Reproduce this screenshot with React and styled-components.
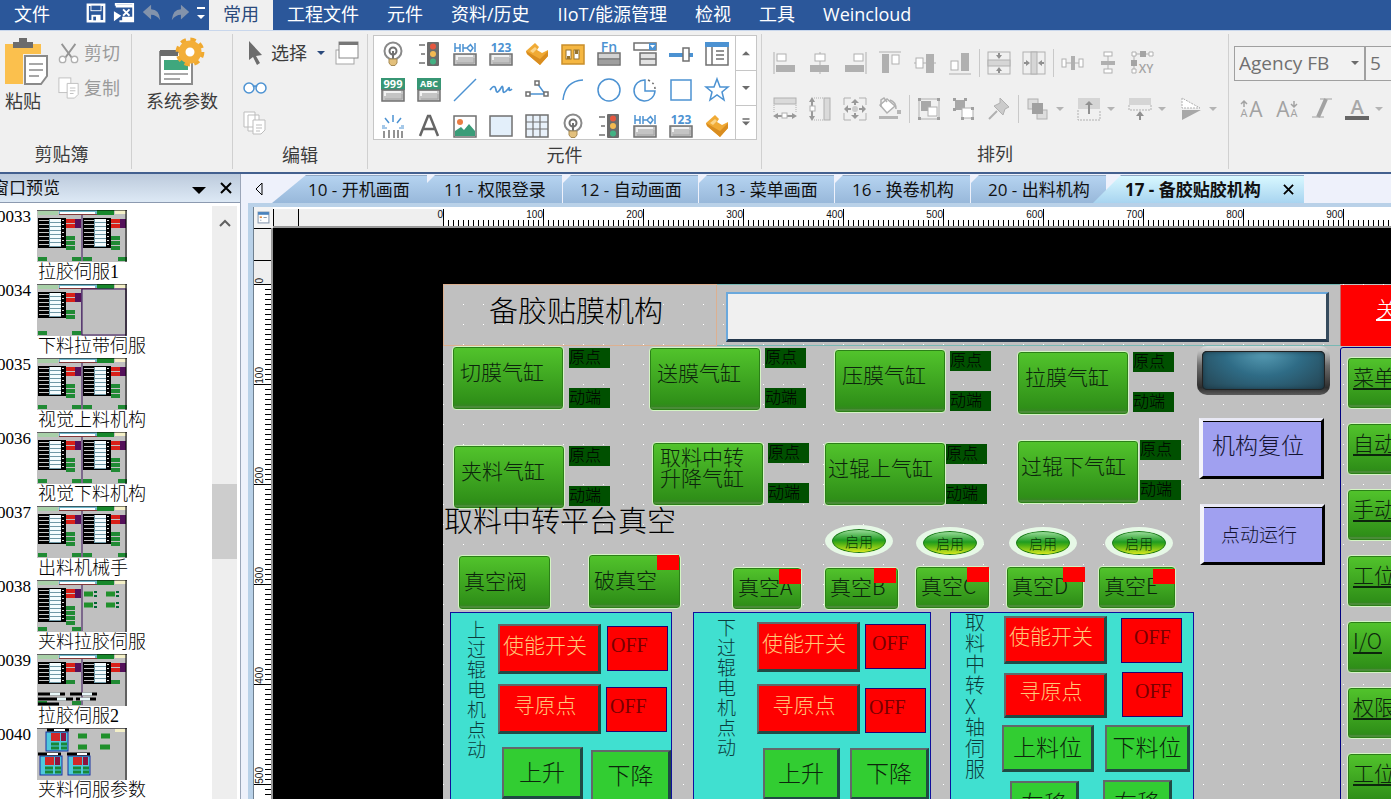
import React from 'react';
import styled, { createGlobalStyle, css } from 'styled-components';

const GlobalStyle = createGlobalStyle`
  * { box-sizing: border-box; }
  body {
    margin: 0;
    overflow: hidden;
    font-family: 'Open Sans', 'Noto Sans CJK SC', sans-serif;
    color: #3c3c3c;
  }
  button {
    margin: 0;
    padding: 0;
    border: 0;
    background: none;
    font: inherit;
    color: inherit;
  }
`;

/* ---------- icons ---------- */

const G = '#707070';
const B = '#4c92d2';
const L = '#b0b0b0';

const Keycap = () => (
  <>
    <rect x="1" y="12" width="22" height="11" fill="#c4c4c4" stroke={G} strokeWidth="1.5" />
    <path d="M4 18V14H20" stroke="#f2f2f2" strokeWidth="2" fill="none" />
    <path d="M4 21H21V16" stroke="#a2a2a2" strokeWidth="1" fill="none" />
  </>
);

const glyphs = {
  bulb: (
    <>
      <circle cx="12" cy="9" r="8.5" fill="#fff" stroke="#8a8a8a" strokeWidth="2" />
      <circle cx="12" cy="9" r="3.5" fill="none" stroke={G} strokeWidth="2" />
      <path d="M12 9V17" stroke={G} strokeWidth="2" />
      <path d="M8 17H16V21L14 23.5H10L8 21Z" fill="#e3c07c" stroke="#a58a55" />
    </>
  ),
  traffic: (
    <>
      <rect x="10" y="0" width="12" height="24" rx="1" fill="#6c6c6c" />
      <circle cx="16" cy="4.5" r="3" fill="#e5573f" />
      <circle cx="16" cy="12" r="3" fill="#f3b951" />
      <circle cx="16" cy="19.5" r="3" fill="#43b284" />
      <path d="M2 3H8M4 12H8M2 21H8" stroke={G} strokeWidth="1.5" />
    </>
  ),
  contact: (
    <>
      <Keycap />
      <path d="M2 1V10M2 6H7M7 2V10M10 2V10M10 6H14M22 1V10M18 2L14 6L18 10M17 2L20 6L17 10" stroke={B} strokeWidth="1.5" fill="none" />
    </>
  ),
  num: (
    <>
      <Keycap />
      <text x="12" y="10" textAnchor="middle" fontSize="12" fontWeight="700" fill={B}>123</text>
    </>
  ),
  block: (
    <>
      <path d="M1 9L10 1L14 5L12 8L17 11L23 8V14L15 23L2 12Z" fill="#f0aa35" />
      <path d="M1 9L15 17L23 9V14L15 23L2 12Z" fill="#d98d20" />
      <path d="M5 9L10 5L12 7L8 11Z" fill="#fbd488" />
    </>
  ),
  panel: (
    <>
      <rect x="1" y="3" width="22" height="19" fill="#f5b742" stroke="#c98f2b" strokeWidth="1.5" />
      <rect x="5" y="8" width="5" height="9" fill="#fff" stroke="#96732c" />
      <rect x="13" y="8" width="5" height="9" fill="#fff" stroke="#96732c" />
      <path d="M6 14H9V17H6ZM14 8H17V12H14Z" fill="#96732c" />
    </>
  ),
  fn: (
    <>
      <text x="12" y="10" textAnchor="middle" fontSize="14" fontWeight="600" fill={B}>Fn</text>
      <rect x="1" y="11" width="22" height="12" fill="#d2d2d2" stroke={G} strokeWidth="1.5" />
      <path d="M1 17H23" stroke={G} strokeWidth="1.5" />
      <rect x="2" y="18" width="20" height="4" fill="#9f9f9f" />
    </>
  ),
  combo: (
    <>
      <rect x="1" y="1" width="22" height="7" fill="#fff" stroke={G} strokeWidth="1.5" />
      <rect x="16" y="1" width="7" height="7" fill={B} />
      <path d="M17 3H22L19.5 6Z" fill="#fff" />
      <path d="M7 11H23V23H7Z" fill="#e3e3e3" stroke={G} strokeWidth="1.5" />
      <path d="M7 17H23" stroke={G} strokeWidth="1.5" />
    </>
  ),
  slider: (
    <>
      <rect x="0" y="11" width="24" height="4" fill={B} />
      <rect x="14" y="6" width="6" height="13" fill="#fff" stroke={G} strokeWidth="1.5" />
    </>
  ),
  form: (
    <>
      <rect x="1" y="1" width="22" height="22" fill="#fff" stroke={G} strokeWidth="1.5" />
      <rect x="0" y="0" width="24" height="5" fill={B} />
      <path d="M7 5V23M11 9H19M11 13H19M11 17H19" stroke={G} strokeWidth="1.5" />
    </>
  ),
  n999: (
    <>
      <rect x="0" y="0" width="24" height="12" fill="#379674" />
      <text x="12" y="10" textAnchor="middle" fontSize="11" fontWeight="700" fill="#fff">999</text>
      <Keycap />
    </>
  ),
  abc: (
    <>
      <rect x="0" y="0" width="24" height="12" fill="#379674" />
      <text x="12" y="9" textAnchor="middle" fontSize="9" fontWeight="700" fill="#fff">ABC</text>
      <Keycap />
    </>
  ),
  line: <path d="M1 23L23 1" stroke={B} strokeWidth="1.5" />,
  wave: <path d="M1 12Q6 5 7 12Q8 17 12 10Q14 6 14 12Q14 17 19 11Q21 8 20 12Q21 13 23 11" stroke={B} strokeWidth="1.7" fill="none" />,
  poly: (
    <>
      <path d="M4 16H20L12 5" stroke={B} strokeWidth="1.5" fill="none" />
      <path d="M10 3H14V7H10ZM1 14H5V18H1ZM19 14H23V18H19Z" fill="#fff" stroke={G} strokeWidth="1.5" />
    </>
  ),
  arc: <path d="M2 22Q4 3 22 2" stroke={B} strokeWidth="1.5" fill="none" />,
  circle: <circle cx="12" cy="12" r="11" fill="none" stroke={B} strokeWidth="1.5" />,
  pie: (
    <>
      <path d="M12 2A10.500 10.500 0 1 0 22 13H12Z" fill="none" stroke={B} strokeWidth="1.5" />
      <path d="M15 2Q22 5 22 11" stroke={G} strokeWidth="1.500" strokeDasharray="2 3" fill="none" />
    </>
  ),
  square: <rect x="2" y="2" width="20" height="20" fill="none" stroke={B} strokeWidth="1.5" />,
  star: <path d="M12 1L15 9H23L17 14L19 22L12 17L5 22L7 14L1 9H9Z" fill="none" stroke={B} strokeWidth="1.5" />,
  flash: (
    <>
      <path d="M12 1V8M4 4L8 9M20 4L16 9" stroke={B} strokeWidth="1.5" />
      <path d="M1 14H6M18 14H23M1 12H4M20 12H23" stroke={B} />
      <path d="M3 17V24M8 16V24M13 16V24M17 16V24M21 17V24" stroke={G} strokeWidth="1.5" />
    </>
  ),
  letter: <path d="M3 22L11 2H13L21 22M6 15H18" fill="none" stroke="#666" strokeWidth="2.500" />,
  image: (
    <>
      <rect x="1" y="2" width="22" height="21" fill="#fff" stroke={G} strokeWidth="1.5" />
      <path d="M2 22V17L8 13L11 16L16 10L22 17V22Z" fill="#3a9c78" />
      <circle cx="7" cy="8" r="3" fill="#ea7d42" />
    </>
  ),
  rect: <rect x="1" y="2" width="22" height="20" fill="#e3effa" stroke={G} strokeWidth="1.5" />,
  grid: (
    <>
      <rect x="1" y="1" width="22" height="22" fill="#e8f1fa" stroke={G} strokeWidth="1.5" />
      <path d="M8 1V23M15 1V23M1 8H23M1 15H23" stroke={G} strokeWidth="1.2" />
    </>
  ),

  alignLeft: (
    <>
      <path d="M1 1V23" stroke={L} />
      <rect x="4" y="3" width="9" height="7" fill="#fff" stroke={L} />
      <rect x="3" y="14" width="19" height="7" fill={L} />
    </>
  ),
  alignCenter: (
    <>
      <path d="M12 1V23" stroke={L} />
      <rect x="7" y="3" width="10" height="7" fill="#fff" stroke={L} />
      <rect x="2" y="14" width="19" height="7" fill={L} />
    </>
  ),
  alignRight: (
    <>
      <path d="M23 1V23" stroke={L} />
      <rect x="11" y="3" width="9" height="7" fill="#fff" stroke={L} />
      <rect x="2" y="14" width="19" height="7" fill={L} />
    </>
  ),
  alignTop: (
    <>
      <path d="M1 1H23" stroke={L} />
      <rect x="4" y="3" width="7" height="19" fill={L} />
      <rect x="14" y="4" width="7" height="9" fill="#fff" stroke={L} />
    </>
  ),
  alignMiddle: (
    <>
      <path d="M1 12H23" stroke={L} />
      <rect x="3" y="7" width="7" height="10" fill="#fff" stroke={L} />
      <rect x="13" y="3" width="8" height="19" fill={L} />
    </>
  ),
  alignBottom: (
    <>
      <path d="M1 23H23" stroke={L} />
      <rect x="3" y="10" width="7" height="9" fill="#fff" stroke={L} />
      <rect x="13" y="2" width="8" height="18" fill={L} />
    </>
  ),
  spaceV: (
    <>
      <rect x="1" y="1" width="22" height="22" fill="none" stroke={L} />
      <rect x="1" y="9" width="22" height="6" fill="#d6d6d6" stroke={L} />
      <path d="M12 2V5M12 22V19" stroke="#909090" strokeWidth="2" />
      <path d="M9 4H15L12 8ZM9 20H15L12 16Z" fill="#909090" />
    </>
  ),
  spaceH: (
    <>
      <rect x="1" y="1" width="22" height="22" fill="none" stroke={L} />
      <rect x="9" y="1" width="6" height="22" fill="#d6d6d6" stroke={L} />
      <path d="M2 12H5M22 12H19" stroke="#909090" strokeWidth="2" />
      <path d="M4 9V15L8 12ZM20 9V15L16 12Z" fill="#909090" />
    </>
  ),
  distH: (
    <>
      <path d="M4 12H20" stroke={L} />
      <rect x="1" y="8" width="4" height="8" fill="#fff" stroke={L} />
      <rect x="10" y="5" width="4" height="14" fill={L} />
      <rect x="18" y="8" width="4" height="8" fill="#fff" stroke={L} />
    </>
  ),
  distV: (
    <>
      <path d="M12 4V20" stroke={L} />
      <rect x="8" y="1" width="8" height="4" fill="#fff" stroke={L} />
      <rect x="5" y="10" width="14" height="4" fill={L} />
      <rect x="8" y="18" width="8" height="4" fill="#fff" stroke={L} />
    </>
  ),
  xy: (
    <>
      <path d="M3 3H21M3 3V21" stroke={L} />
      <path d="M1 1H5V5H1ZM18 1H22V5H18ZM1 18H5V22H1Z" fill="#fff" stroke={L} />
      <path d="M9 0H15V6H9ZM0 9H6V15H0Z" fill="#a4a4a4" />
      <text x="15" y="22" textAnchor="middle" fontSize="12" fontWeight="600" fill="#a4a4a4">XY</text>
    </>
  ),
  sameW: (
    <>
      <rect x="1" y="1" width="22" height="6" fill="#dadada" stroke={L} />
      <path d="M1 8V15M23 8V15" stroke={L} strokeDasharray="1 1" />
      <path d="M4 19H20" stroke="#999" strokeWidth="2" />
      <path d="M0 19L5 16V22ZM24 19L19 16V22Z" fill="#999" />
      <rect x="9" y="16" width="5" height="5" fill="#fff" stroke={L} />
    </>
  ),
  sameH: (
    <>
      <rect x="16" y="1" width="6" height="22" fill="#dadada" stroke={L} />
      <path d="M6 1H15M6 23H15" stroke={L} strokeDasharray="1 1" />
      <path d="M4 4V20" stroke="#999" strokeWidth="2" />
      <path d="M4 0L1 5H7ZM4 24L1 19H7Z" fill="#999" />
      <rect x="2" y="9" width="5" height="5" fill="#fff" stroke={L} />
    </>
  ),
  sameSize: (
    <>
      <path d="M1 8V1H8M16 1H23V8M23 16V23H16M8 23H1V16" fill="none" stroke={L} />
      <circle cx="12" cy="12" r="3" fill="#ccc" />
      <path d="M12 2L8 6H11V8H13V6H16ZM12 22L8 18H11V16H13V18H16ZM1 12L5 8V11H8V13H5V16ZM23 12L19 8V11H16V13H19V16Z" fill="#999" />
    </>
  ),
  fill: (
    <>
      <path d="M2 8L9 2L17 9L9 16Z" fill="#fff" stroke={L} strokeWidth="1.500" />
      <path d="M3 10V3L6 1L9 5M12 3Q18 5 18 12" fill="none" stroke={L} strokeWidth="1.500" />
      <path d="M1 19H20V22H1ZM19 13H23V17H19Z" fill="#b5b5b5" />
    </>
  ),
  group: (
    <>
      <rect x="2" y="2" width="20" height="20" fill="none" stroke={L} />
      <rect x="4" y="4" width="10" height="10" fill="#a8a8a8" />
      <rect x="11" y="10" width="9" height="9" fill="#fff" stroke={L} />
      <path d="M1 1H4V4H1ZM20 1H23V4H20ZM1 20H4V23H1ZM20 20H23V23H20Z" fill="#a0a0a0" />
    </>
  ),
  ungroup: (
    <>
      <rect x="3" y="3" width="10" height="10" fill="#a8a8a8" />
      <rect x="10" y="11" width="11" height="10" fill="#fff" stroke={L} />
      <path d="M1 1H4V4H1ZM12 1H15V4H12ZM1 11H4V14H1ZM19 10H22V13H19ZM9 20H12V23H9ZM19 20H22V23H19Z" fill="#a0a0a0" />
    </>
  ),
  pin: (
    <>
      <path d="M13 1L22 10L18 12L16 18L7 9L13 6Z" fill="#cbcbcb" stroke={L} />
      <path d="M10 14L2 22" stroke={L} strokeWidth="2" />
    </>
  ),
  order: (
    <>
      <rect x="2" y="2" width="10" height="10" fill="#ddd" stroke={L} />
      <rect x="11" y="13" width="10" height="9" fill="#ddd" stroke={L} />
      <rect x="6" y="6" width="11" height="11" fill="#a0a0a0" />
    </>
  ),
  layerUp: (
    <>
      <rect x="1" y="1" width="22" height="11" fill="#d5d5d5" />
      <path d="M1 13V23H23V13" fill="none" stroke={L} strokeDasharray="2 1" />
      <path d="M12 17V7" stroke="#909090" strokeWidth="2" />
      <path d="M8 8L12 4L16 8Z" fill="#909090" />
    </>
  ),
  layerTop: (
    <>
      <rect x="1" y="1" width="22" height="7" fill="#d5d5d5" />
      <path d="M1 8V13H23V8" fill="none" stroke={L} strokeDasharray="2 1" />
      <path d="M12 23V18" stroke="#909090" strokeWidth="2" />
      <path d="M8 19L12 14L16 19Z" fill="#909090" />
    </>
  ),
  flip: (
    <>
      <path d="M3 1V11H21Z" fill="#fff" stroke={L} strokeDasharray="2 1" />
      <path d="M3 13H22L3 23Z" fill="#a8a8a8" />
    </>
  ),
  fontUp: (
    <>
      <text x="16" y="20" textAnchor="middle" fontSize="21" fill="#a2a2a2">A</text>
      <text x="4" y="20" textAnchor="middle" fontSize="11" fill="#a2a2a2">A</text>
      <path d="M4 10V4M1 7L4 4L7 7" fill="none" stroke="#a2a2a2" strokeWidth="1.500" />
    </>
  ),
  fontDown: (
    <>
      <text x="8" y="20" textAnchor="middle" fontSize="21" fill="#a2a2a2">A</text>
      <text x="19" y="20" textAnchor="middle" fontSize="11" fill="#a2a2a2">A</text>
      <path d="M19 4V10M16 7L19 10L22 7" fill="none" stroke="#a2a2a2" strokeWidth="1.500" />
    </>
  ),
  italic: (
    <>
      <path d="M10 2H22M2 20H14" stroke="#a2a2a2" fill="none" />
      <path d="M16 2L8 20" stroke="#a2a2a2" strokeWidth="4" />
    </>
  ),
  fontColor: (
    <>
      <text x="12" y="17" textAnchor="middle" fontSize="20" fontWeight="600" fill="#a8a8a8">A</text>
      <rect x="0" y="19" width="24" height="4" fill="#666" />
    </>
  ),

  save: (
    <>
      <path d="M3 3H21V21H3Z" fill="none" stroke="#fff" strokeWidth="2.500" />
      <path d="M6 3H18V10H6Z" fill="#fff" />
      <rect x="7" y="4" width="10" height="5" fill="#2b579a" />
      <path d="M7 14H17V21H7Z" fill="#fff" />
      <rect x="9" y="16" width="3" height="4" fill="#2b579a" />
    </>
  ),
  saveAll: (
    <>
      <path d="M3 4V2H22V21H7" fill="none" stroke="#fff" strokeWidth="2" />
      <path d="M3 3H22V6H3ZM1 10L9 15L1 21ZM10 16H22V21H10Z" fill="#fff" />
      <path d="M11 8L18 15M18 8L11 15" stroke="#fff" strokeWidth="2" />
    </>
  ),
  undo: <path d="M2 11L11 3V8Q20 8 21 20Q17 14 11 14V19Z" fill="#8393ab" />,
  redo: <path d="M22 11L13 3V8Q4 8 3 20Q7 14 13 14V19Z" fill="#8393ab" />,
  cut: (
    <>
      <path d="M4 2L15 17M19 2L8 17" stroke="#959595" strokeWidth="2" />
      <circle cx="5" cy="19" r="3.500" fill="#fff" stroke={L} strokeWidth="1.500" />
      <circle cx="18" cy="19" r="3.500" fill="#fff" stroke={L} strokeWidth="1.500" />
    </>
  ),
  copy: (
    <>
      <rect x="1" y="1" width="13" height="16" fill="#fff" stroke="#bdbdbd" />
      <path d="M10 7H22V19L18 23H10Z" fill="#fff" stroke="#bdbdbd" />
      <path d="M13 12H19M13 15H19M13 18H17" stroke="#bdbdbd" />
    </>
  ),
  copies: (
    <>
      <path d="M1 1H12V16H1ZM5 4H16V20H5Z" fill="#fff" stroke="#bdbdbd" />
      <path d="M10 9H22V19L18 23H10Z" fill="#fff" stroke="#bdbdbd" />
      <path d="M13 14H19M13 17H19M13 20H17" stroke="#bdbdbd" />
    </>
  ),
  pointer: <path d="M6 0V19L10 16L14 24L17 22L13 15L19 14Z" fill="#6c6c6c" />,
  windows: (
    <>
      <rect x="1" y="9" width="18" height="14" fill="#fff" stroke="#a5a5a5" />
      <rect x="4" y="1" width="19" height="16" fill="#fff" stroke="#888" />
      <rect x="4" y="1" width="19" height="3" fill="#777" />
    </>
  ),
  glasses: (
    <>
      <circle cx="6" cy="12" r="5" fill="#fff" stroke={B} strokeWidth="1.500" />
      <circle cx="18" cy="12" r="5" fill="#fff" stroke={B} strokeWidth="1.500" />
      <path d="M10 11Q12 9 14 11" fill="none" stroke={B} strokeWidth="1.500" />
    </>
  ),
  screen: (
    <>
      <rect x="2" y="2" width="20" height="20" fill="#fff" stroke="#8a9bb0" strokeWidth="2" />
      <rect x="2" y="2" width="20" height="5" fill="#4b83bd" />
      <path d="M6 12H8M12 12H18M6 17H8" stroke="#8a9bb0" strokeWidth="2" />
      <rect x="5" y="10" width="4" height="3" fill="#e0893e" />
    </>
  ),
  paste: (
    <>
      <rect x="0" y="3" width="18" height="20" fill="#fbc04d" />
      <path d="M4 2H7V0H11V2H14V5H4Z" fill="#6c6c6c" />
      <path d="M9 8H22V20L19 24H9Z" fill="#f0f0f0" />
      <path d="M10 9H21V19L18 23H10Z" fill="#fff" stroke="#8a8a8a" />
      <path d="M12 13H19M12 16H19M12 19H17" stroke="#8a8a8a" strokeWidth="0.800" />
    </>
  ),
  params: (
    <>
      <rect x="1" y="7" width="16" height="16" fill="#fff" stroke="#8c8c8c" />
      <rect x="1" y="6" width="9" height="3" fill="#6c6c6c" />
      <rect x="3" y="11" width="12" height="5" fill="#3fa77d" />
      <path d="M3 18H15M3 20.500H11" stroke="#8c8c8c" strokeWidth="0.800" />
      <circle cx="16" cy="7" r="6" fill="none" stroke="#f0a92f" strokeWidth="2.400" strokeDasharray="2.600 2.112" />
      <circle cx="16" cy="7" r="4" fill="#fff" stroke="#f3ae38" strokeWidth="3.500" />
    </>
  ),
  expand: (
    <>
      <path d="M5 6H19" stroke="#6c6c6c" strokeWidth="3" />
      <path d="M4 11H20L12 19Z" fill="#6c6c6c" />
    </>
  ),
};

const IconSvg = styled.svg`
  display: block;
  flex: none;
  overflow: visible;
`;

const Icon = ({ name, size = 24 }) => (
  <IconSvg width={size} height={size} viewBox="0 0 24 24" fill="none" aria-hidden="true">
    {glyphs[name]}
  </IconSvg>
);

const Caret = styled.span`
  display: inline-block;
  flex: none;
  border: ${({ $size = 5 }) => $size}px solid transparent;
  border-top-color: ${({ $color = '#a8a8a8' }) => $color};
  border-bottom-width: 0;
`;

/* ---------- menu ---------- */

const Screen = styled.div`
  display: flex;
  flex-direction: column;
  height: 100vh;
  background: #eef1fb;
`;

const MenuBar = styled.nav`
  display: flex;
  flex: none;
  height: 30px;
  overflow: hidden;
  background: #2b579a;
`;

const MenuTab = styled.button`
  flex: none;
  padding: 0 14px 3px;
  height: 30px;
  font-size: 18px;
  line-height: 26px;
  white-space: nowrap;
  color: ${({ $active }) => ($active ? '#2b4a7c' : '#fff')};
  background: ${({ $active }) => ($active ? '#f0f0f0' : 'transparent')};
`;

const QuickTools = styled.div`
  display: flex;
  align-items: center;
  gap: 6px;
  width: 145px;
  padding: 0 6px 4px 21px;
`;

const QuickButton = styled.button`
  display: flex;
  flex: none;
`;

const QuickMore = styled.button`
  padding-top: 4px;
  border-top: 2px solid #fff;
  line-height: 0;
`;

/* ---------- ribbon ---------- */

const Ribbon = styled.div`
  display: flex;
  flex: none;
  height: 144px;
  overflow: hidden;
  background: #f0f0f0;
  border-top: 1px solid #c9d7ec;
  border-bottom: 2px solid #43608f;
`;

const GroupTitle = styled.div`
  font-size: 18px;
  line-height: 30px;
  text-align: center;
`;

const Group = styled.section`
  display: flex;
  flex-direction: column;
  flex: none;
  width: ${({ $width }) => $width}px;
  margin: 3px 0;
  border-right: 1px solid #d0d0d0;

  &:first-child ${GroupTitle} {
    padding-right: 8px;
  }
`;

const GroupBody = styled.div`
  display: flex;
  flex: 1;
  justify-content: ${({ $center }) => ($center ? 'center' : 'flex-start')};
  padding: ${({ $low }) => ($low ? 6 : 1)}px 5px 0;
`;

const BigButton = styled.button`
  display: flex;
  flex-direction: column;
  align-items: ${({ $start }) => ($start ? 'flex-start' : 'center')};
  padding-top: 3px;
  font-size: 18px;
  line-height: 30px;
  height: 88px;
  white-space: nowrap;
`;

const ToolColumn = styled.div`
  display: flex;
  flex-direction: column;
  padding-left: 5px;
`;

const ToolRow = styled.div`
  display: flex;
  align-items: center;
  height: 35px;
  gap: 10px;
`;

const ToolButton = styled.button`
  display: flex;
  align-items: center;
  gap: 4px;
  font-size: 18px;
  line-height: 24px;
  white-space: nowrap;
  color: ${({ disabled }) => (disabled ? '#9a9a9a' : '#3c3c3c')};
`;

const Gallery = styled.div`
  display: flex;
  width: 385px;
  height: 105px;
  background: #fff;
  border: 1px solid #c6c6c6;
`;

const GalleryGrid = styled.div`
  display: grid;
  flex: 1;
  grid-template-columns: repeat(10, 36px);
  grid-auto-rows: 36px;
  padding-left: 1px;
  overflow: hidden;
`;

const GalleryItem = styled.button`
  display: flex;
  align-items: center;
  justify-content: center;
`;

const GalleryNav = styled.div`
  display: grid;
  grid-template-rows: 1fr 1fr 1fr;
  width: 21px;
  border-left: 1px solid #c6c6c6;

  button + button {
    border-top: 1px solid #c6c6c6;
  }
`;

const NavArrow = styled.button`
  display: flex;
  align-items: center;
  justify-content: center;
  transform: ${({ $up }) => ($up ? 'rotate(180deg)' : 'none')};
`;

const IconCell = styled.button`
  display: flex;
  align-items: center;
  justify-content: center;
  width: ${({ $menu }) => ($menu ? 51 : 35)}px;
  height: 46px;
  padding-right: ${({ $menu }) => ($menu ? 1 : 0)}px;
  gap: 6px;
`;

const Divider = styled.span`
  width: 1px;
  height: 28px;
  margin: 0 1px 0 2px;
  background: #c9c9c9;
`;

const ArrangeRow = styled.div`
  display: flex;
  align-items: center;
  height: 46px;
`;

const FontFields = styled.div`
  display: flex;
  align-items: center;
  height: 46px;
`;

const FontPicker = styled.label`
  display: grid;
  align-items: center;
  width: 131px;

  select,
  span {
    grid-area: 1 / 1;
  }

  span {
    justify-self: end;
    margin-right: 6px;
    pointer-events: none;
  }
`;

const FontSelect = styled.select`
  appearance: none;
  width: 100%;
  height: 35px;
  padding: 0 4px;
  border: 1px solid #a0a0a0;
  border-radius: 0;
  background: #f2f2f2;
  color: #707070;
  font: 19px 'Open Sans', sans-serif;
`;

const SizeInput = styled.input`
  width: 60px;
  height: 35px;
  padding: 0 4px;
  border: 1px solid #a0a0a0;
  background: #f2f2f2;
  color: #707070;
  font: 19px 'Open Sans', sans-serif;
`;

/* ---------- window preview ---------- */

const Body = styled.div`
  display: flex;
  flex: 1;
  min-height: 0;
`;

const Sidebar = styled.aside`
  display: flex;
  flex: none;
  flex-direction: column;
  width: 241px;
  border-right: 1px solid #9aa5b8;
  background: #fff;
`;

const SidebarHead = styled.header`
  display: flex;
  align-items: center;
  gap: 14px;
  flex: none;
  height: 29px;
  padding-right: 8px;
  border-bottom: 1px solid #8c9ab0;
  background: linear-gradient(#bccadc, #dde9f5);
  color: #111;

  h2 {
    flex: 1;
    margin: 0 0 0 -8px;
    font-size: 17px;
    font-weight: 400;
    line-height: 26px;
  }
`;

const SidebarBody = styled.div`
  display: flex;
  flex: 1;
  min-height: 0;
  padding-top: 3px;
`;

const PreviewList = styled.ul`
  flex: 1;
  margin: 0;
  padding: 4px 0 0;
  overflow: hidden;
  list-style: none;
`;

const PreviewItem = styled.li`
  display: grid;
  grid-template-columns: 37px 1fr;
  grid-template-rows: 52px 22px;
  color: #000;
  font-family: 'Liberation Serif', 'Noto Sans CJK SC', serif;
  font-weight: 300;

  b {
    margin-left: -3px;
    font-size: 17px;
    font-weight: 400;
    line-height: 14px;
  }

  span {
    grid-column: 2;
    padding-left: 1px;
    font-size: 18px;
    line-height: 20px;
  }
`;

const Scroll = styled.div`
  display: grid;
  grid-template-rows: 30px 248px 75px;
  width: 25px;
  margin-right: 3px;
  background: #eee;

  i {
    grid-row: 3;
    background: #cdcdcd;
  }
`;

const ServoTable = ({ x, rows = 7, y = 9, buttons = 3 }) => (
  <g>
    <rect x={x} y={y - 1} width="28" height={rows * 4 + 2} fill="#000" />
    {Array.from({ length: rows }, (_, i) => (
      <g key={i}>
        <rect x={x + 1} y={y + 1 + i * 4} width="10" height="1" fill="#c4c4c4" />
        <rect x={x + 11} y={y + i * 4} width="12" height="4" fill="#6f98a6" />
        <rect x={x + 12} y={y + i * 4} width="11" height="3" fill="#f4fcfe" />
        <rect x={x + 24} y={y + 1 + i * 4} width="2" height="1" fill="#ddd" />
      </g>
    ))}
    <rect x={x + 28} y={y} width="9" height="4" fill="#d82018" />
    <rect x={x + 28} y={y + 5} width="9" height="4" fill="#d82018" />
    <rect x={x + 37} y={y} width="6" height="9" fill="#54105a" />
    {Array.from({ length: buttons }, (_, i) => (
      <rect key={i} x={x + 28} y={y + 17 + i * 5} width="9" height="4" fill="#208a34" />
    ))}
  </g>
);

const MotorBox = ({ x, y }) => (
  <g>
    <rect x={x} y={y} width="22" height="19" fill="#50c8dc" stroke="#1830a0" />
    <rect x={x + 5} y={y + 1} width="9" height="8" fill="#d02828" />
    <rect x={x + 15} y={y + 1} width="5" height="8" fill="#8c1440" />
    <path d={`M${x + 5} ${y + 12}h8m2 0h6M${x + 5} ${y + 16}h8m2 0h6`} stroke="#188838" strokeWidth="3" />
  </g>
);

const Chips = () => (
  <>
    <path d="M47 14h9M69 14h9M47 25h9M69 25h9" stroke="#20902c" strokeWidth="5" />
    <path d="M57 12h3M79 12h3M57 16h3M79 16h3M57 23h3M79 23h3M57 27h3M79 27h3" stroke="#063" strokeWidth="2" />
  </>
);

const Thumbnail = ({ kind }) => (
  <svg width="90" height="52" viewBox="0 0 90 52" aria-hidden="true">
    <rect width="90" height="52" fill="#c0c0c0" />
    {kind !== 'motors' && (
      <>
        <rect x="1" y="1" width="20" height="4" fill="#a8d0a8" />
        <rect x="22" y="0" width="38" height="5" fill="#70b8cc" />
        <rect x="23" y="2" width="35" height="2" fill="#fff" />
        <rect x="22" y="4" width="38" height="1" fill="#803838" />
        <rect x="60" y="0" width="17" height="5" fill="#18882c" />
        <rect x="78" y="0" width="11" height="4" fill="#f4f0c8" />
        <path d="M45 5V51" stroke="#381058" />
        <path d="M1 49h9m25 0h9" stroke="#208a34" strokeWidth="4" />
      </>
    )}
    {kind === 'double' && (
      <>
        <ServoTable x={1} />
        <ServoTable x={46} />
        <path d="M46 49h9m26 0h9" stroke="#208a34" strokeWidth="4" />
      </>
    )}
    {kind === 'single' && (
      <>
        <ServoTable x={1} buttons={2} rows={6} />
        <rect x="45" y="5" width="44" height="46" fill="#c0c0c0" stroke="#381058" />
      </>
    )}
    {kind === 'chips' && (
      <>
        <ServoTable x={1} rows={8} buttons={4} />
        <Chips />
      </>
    )}
    {kind === 'wide' && (
      <>
        <ServoTable x={1} rows={5} buttons={1} />
        <ServoTable x={46} rows={5} buttons={1} />
        <path d="M1 40h27m5 0h27M1 45h35m3 0h20M1 50h21" stroke="#000" strokeWidth="3" />
        <path d="M13 40h10m22 0h10M20 45h9m14 0h10" stroke="#e8f8fa" strokeWidth="3" />
      </>
    )}
    {kind === 'motors' && (
      <>
        <MotorBox x={9} y={4} />
        <MotorBox x={3} y={28} />
        <MotorBox x={31} y={28} />
        <path d="M10 2h22M1 26h23M30 26h23" stroke="#000" strokeWidth="3" />
        <path d="M17 2h11M10 26h11m19 0h10" stroke="#fff" strokeWidth="2" />
        <path d="M41 8h9m14 0h9M41 19h9m13 0h10" stroke="#20902c" strokeWidth="5" />
        <rect x="78" y="1" width="10" height="3" fill="#f4f0c8" />
      </>
    )}
    <path d="M0 0H90M89 0V52" stroke="#000" />
  </svg>
);

/* ---------- editor ---------- */

const Editor = styled.main`
  display: flex;
  flex: 1;
  flex-direction: column;
  min-width: 0;
`;

const DocTabs = styled.div`
  display: flex;
  flex: none;
  align-items: flex-end;
  height: 29px;
  overflow: hidden;
`;

const TabScroll = styled.button`
  display: flex;
  align-items: center;
  width: 31px;
  height: 28px;
  padding-left: 14px;
`;

const docShape = {
  first: css`
    width: 155px;
    padding-left: 36px;
    clip-path: polygon(34px 0, 100% 0, 100% 100%, 0 100%);
  `,
  middle: css`
    width: 136px;
    padding-left: 17px;
    clip-path: polygon(8px 0, calc(100% - 1px) 0, calc(100% - 1px) 100%, 0 100%, 0 8px);
  `,
  active: css`
    width: 211px;
    margin-left: -14px;
    padding-left: 32px;
    clip-path: polygon(28px 0, 100% 0, 100% 100%, 0 100%);
  `,
};

const DocTab = styled.button`
  display: flex;
  align-items: center;
  flex: none;
  gap: 22px;
  height: 28px;
  font-size: 17px;
  line-height: 26px;
  white-space: nowrap;
  color: #111;
  background: ${({ $shape }) =>
    $shape === 'active' ? 'linear-gradient(#d8f8ff, #a8d4f0)' : 'linear-gradient(#b5d3f0, #98b8da)'};
  border-top: 1px solid #8fa8c4;
  font-weight: ${({ $shape }) => ($shape === 'active' ? 700 : 400)};
  ${({ $shape }) => docShape[$shape]}
`;

const Frame = styled.div`
  display: grid;
  flex: 1;
  grid-template-columns: 20px 1fr;
  grid-template-rows: 21px 1fr;
  min-height: 0;
  margin-left: 7px;
  padding: 4px 0 0 5px;
  background: #b9d1e8;
`;

const Corner = styled.div`
  display: flex;
  align-items: center;
  justify-content: center;
  background: #f4f4f4;
  border-left: 1px solid #6f8090;
`;

const rulerText = css`
  color: #111;
  font-family: 'Liberation Sans', sans-serif;
  font-size: 10px;
  line-height: 12px;
`;

const RulerX = styled.div`
  display: flex;
  overflow: hidden;
  background: #fff;
  border-bottom: 2px solid #999;
  ${rulerText}
`;

const CellX = styled.div`
  flex: none;
  width: ${({ $lead }) => ($lead ? 171 : 100)}px;
  height: 17px;
  margin-top: 2px;
  text-align: right;
  border-right: 1px solid #000;
  background: ${({ $lead }) =>
    $lead
      ? 'linear-gradient(#000, #000) 0 0 / 1px 100% no-repeat, linear-gradient(#000, #000) 25px 0 / 1px 100% no-repeat, #efefef'
      : 'repeating-linear-gradient(90deg, transparent 0 4px, #000 4px 5px) 0 100% / 100% 6px no-repeat'};
`;

const RulerY = styled.div`
  overflow: hidden;
  background: #fff;
  border-left: 1px solid #6f8090;
  border-right: 2px solid #999;
  ${rulerText}
`;

const CellY = styled.div`
  display: flex;
  align-items: flex-end;
  height: ${({ $lead }) => ($lead ? 57 : 100)}px;
  border-bottom: 1px solid #000;
  background: ${({ $lead }) =>
    $lead
      ? 'linear-gradient(#000, #000) 0 0 / 100% 1px no-repeat, linear-gradient(#000, #000) 0 32px / 100% 1px no-repeat, #efefef'
      : 'repeating-linear-gradient(transparent 0 4px, #000 4px 5px) 100% 0 / 6px 100% no-repeat'};

  span {
    writing-mode: vertical-rl;
    transform: rotate(180deg);
  }
`;

const Workspace = styled.div`
  position: relative;
  overflow: hidden;
  background: #000;
`;

/* The HMI page is a free canvas: widgets are pinned at their design coordinates. */
const HmiPage = styled.div`
  position: absolute;
  left: 170px;
  top: 56px;
  width: 1280px;
  height: 800px;
  color: #0c250c;
  font-family: 'Noto Sans CJK SC', sans-serif;
  font-weight: 300;
  background: conic-gradient(from 270deg at 1px 1px, #fff 90deg, #c0c0c0 0) 0 0 / 20px 20px;
`;

const Pin = styled.div.attrs(({ $at: [x, y, w, h] }) => ({
  style: { left: x, top: y, width: w, height: h },
}))`
  position: absolute;
  white-space: nowrap;
`;

const Title = styled(Pin)`
  padding: 0 0 0 45px;
  border: 1px solid #dcb090;
  color: #000;
  font-size: 29px;
  line-height: 48px;
`;

const Banner = styled(Pin)`
  padding: 7px 11px 2px 9px;
  border: solid #78b8b4;
  border-width: 1px 0;

  input {
    display: block;
    width: 100%;
    height: 50px;
    border: solid #6aa8dc;
    border-width: 2px 3px 3px 2px;
    border-right-color: #354a5c;
    border-bottom-color: #24384c;
    background: #f0f0f0;
  }
`;

const Caption = styled(Pin)`
  color: #000;
  font-size: 29px;
  line-height: 36px;
`;

const CloseBlock = styled(Pin)`
  padding: 0 0 18px 35px;
  background: #f00;
  border-left: 1px solid #c46a6a;
  color: #fff;
  font-size: 22px;
  line-height: 26px;
  text-align: left;
  text-decoration: underline;
`;

const Outline = styled(Pin)`
  border: 1px solid #000080;
  border-radius: 3px;
`;

const GreenButton = styled(Pin)`
  display: flex;
  align-items: center;
  padding: 0 0 ${({ $lift = 10 }) => $lift}px ${({ $inset = 7 }) => $inset}px;
  border: 1px solid #d4f4c4;
  border-radius: 4px;
  background: linear-gradient(#52c42c, #2f8f18 90%, #3c7c2c);
  box-shadow: inset 0 0 0 1px #2c8018, inset 0 -4px 0 -1px #4a8c38;
  font-size: 21px;
  line-height: 21px;
  text-align: left;
  white-space: pre;
  text-decoration: ${({ $link }) => ($link ? 'underline' : 'none')};
  text-underline-offset: 3px;
`;

const Tag = styled(Pin)`
  background: #005000;
  color: #000;
  font-size: 16px;
  line-height: 17px;
`;

const Flag = styled(Pin)`
  background: #f00;
`;

const Lamp = styled(Pin)`
  border: solid #e6f8e6;
  border-width: 4px 7px;
  border-radius: 50%;
  background: linear-gradient(#a4e0a4 0, #1f9c20 46%, #4cb014 60%, #e4ee20);
  box-shadow: inset 0 0 0 1px #187818;
  color: #073807;
  font-size: 14px;
  line-height: 22px;
`;

const GlassLamp = styled(Pin)`
  border: 5px solid transparent;
  border-radius: 10px;
  background:
    radial-gradient(ellipse at 50% 0, #5aa0b8, #2f6c86 45%, #24414e 100%) padding-box,
    linear-gradient(#dcdcdc, #6c6c6c 40%, #2e2e2e 85%, #5c5c5c) border-box;
  box-shadow: inset 0 0 0 1px #222, inset 0 0 5px #142a34;
`;

const Violet = styled(Pin)`
  padding: 0 8px ${({ $lift }) => $lift}px 0;
  border: solid #000;
  border-width: 3px 3px 3px 4px;
  border-top-color: #e8e8f4;
  border-left-color: #f4f4fa;
  background: #a0a0f0;
  box-shadow: inset 0 1px 0 #000;
  color: #141432;
  font-size: ${({ $size }) => $size}px;
`;

const Cabinet = styled(Pin)`
  border: 1px solid #10109c;
  background: #40e0d0;
`;

const VerticalText = styled(Pin)`
  color: #0c3c3c;
  font-size: ${({ $line }) => $line - 1}px;
  line-height: ${({ $line }) => $line}px;
  white-space: normal;
  word-break: break-all;
`;

const bevel = css`
  border: solid #62686a;
  border-width: 2px 3px 3px 2px;
  border-right-color: #1f4a44;
  border-bottom-color: #1f4a44;
`;

const RedButton = styled(Pin)`
  padding: 0 8px 10px 0;
  background: #f00;
  color: #ffc878;
  font-size: 21px;
  ${bevel}
`;

const OffLight = styled(Pin)`
  padding: 4px 0 0 ${({ $inset }) => $inset}px;
  border: 1px solid #200070;
  background: #f00;
  color: #780000;
  font-family: 'Liberation Serif', serif;
  font-size: 20px;
  line-height: 28px;
`;

const JogButton = styled(Pin)`
  padding-bottom: 4px;
  background: #32cd32;
  font-size: 23px;
  ${bevel}
`;

/* ---------- data ---------- */

const menus = ['工程文件', '元件', '资料/历史', 'IIoT/能源管理', '检视', '工具', 'Weincloud'];

const galleryIcons = [
  'bulb', 'traffic', 'contact', 'num', 'block', 'panel', 'fn', 'combo', 'slider', 'form',
  'n999', 'abc', 'line', 'wave', 'poly', 'arc', 'circle', 'pie', 'square', 'star',
  'flash', 'letter', 'image', 'rect', 'grid', 'bulb', 'traffic', 'contact', 'num', 'block',
];

const arrangeTop = [
  'alignLeft', 'alignCenter', 'alignRight', 'alignTop', 'alignMiddle', 'alignBottom', '|',
  'spaceV', 'spaceH', '|', 'distH', 'distV', 'xy',
];
const arrangeBottom = ['sameW', 'sameH', 'sameSize', 'fill', '|', 'group', 'ungroup', 'pin', '|'];
const arrangeMenus = ['order', 'layerUp', 'layerTop', 'flip'];

const previews = [
  ['0033', '拉胶伺服1', 'double'],
  ['0034', '下料拉带伺服', 'single'],
  ['0035', '视觉上料机构', 'double'],
  ['0036', '视觉下料机构', 'double'],
  ['0037', '出料机械手', 'double'],
  ['0038', '夹料拉胶伺服', 'chips'],
  ['0039', '拉胶伺服2', 'wide'],
  ['0040', '夹料伺服参数', 'motors'],
];

const docs = ['10 - 开机画面', '11 - 权限登录', '12 - 自动画面', '13 - 菜单画面', '16 - 换卷机构', '20 - 出料机构'];

const cylinders = [
  ['切膜气缸', [9, 62, 112, 64]],
  ['送膜气缸', [206, 63, 112, 64]],
  ['压膜气缸', [391, 65, 112, 64]],
  ['拉膜气缸', [574, 67, 112, 64]],
  ['夹料气缸', [10, 161, 112, 64]],
  ['取料中转\n升降气缸', [209, 158, 112, 64]],
  ['过辊上气缸', [381, 158, 122, 64]],
  ['过辊下气缸', [574, 156, 122, 64]],
];

const valves = [
  ['真空阀', [15, 271, 93, 55]],
  ['破真空', [145, 270, 93, 55]],
  ['真空A', [289, 283, 70, 43]],
  ['真空B', [381, 283, 75, 43]],
  ['真空C', [472, 282, 75, 43]],
  ['真空D', [563, 282, 78, 43]],
  ['真空E', [655, 282, 78, 43]],
];

const flags = [[214, 271], [336, 285], [431, 284], [524, 283], [620, 283], [710, 285]];

const tags = [
  [126, 64], [322, 64], [507, 67], [690, 68],
  [126, 162], [325, 159], [503, 160], [697, 156],
];

const lamps = [[382, 241], [473, 243], [566, 243], [662, 243]];

const navButtons = ['菜单', '自动', '手动', '工位', 'I/O', '权限', '工位'];

const cabinets = [[7, 328, 222, 300], [250, 328, 238, 300], [507, 328, 244, 300]];

const redButtons = [
  ['使能开关', [55, 340, 103, 50]],
  ['寻原点', [55, 400, 103, 50]],
  ['使能开关', [314, 338, 103, 50]],
  ['寻原点', [314, 400, 103, 50]],
  ['使能开关', [561, 332, 103, 48]],
  ['寻原点', [561, 389, 103, 45]],
];

const offLights = [
  [164, 342, 3], [163, 403, 3], [422, 340, 6], [422, 404, 3], [678, 334, 12], [679, 388, 12],
];

const jogButtons = [
  ['上升', [59, 463, 81, 52]],
  ['下降', [148, 466, 80, 52]],
  ['上升', [320, 464, 77, 52]],
  ['下降', [407, 464, 79, 52]],
  ['上料位', [559, 441, 92, 47]],
  ['下料位', [662, 441, 85, 47]],
  ['左移', [567, 497, 69, 47]],
  ['右移', [660, 496, 69, 47]],
];

/* ---------- sections ---------- */

function MainMenu() {
  return (
    <MenuBar>
      <MenuTab>文件</MenuTab>
      <QuickTools>
        {['save', 'saveAll', 'undo', 'redo'].map(name => (
          <QuickButton key={name} aria-label={name}>
            <Icon name={name} size={22} />
          </QuickButton>
        ))}
        <QuickMore aria-label="more">
          <Caret $size={4} $color="#fff" />
        </QuickMore>
      </QuickTools>
      <MenuTab $active>常用</MenuTab>
      {menus.map(name => (
        <MenuTab key={name}>{name}</MenuTab>
      ))}
    </MenuBar>
  );
}

const renderCell = (name, i) =>
  name === '|' ? (
    <Divider key={i} />
  ) : (
    <IconCell key={i} aria-label={name} disabled>
      <Icon name={name} />
    </IconCell>
  );

function MainRibbon() {
  return (
    <Ribbon>
      <Group $width={132}>
        <GroupBody>
          <BigButton $start>
            <Icon name="paste" size={48} />
            粘贴
          </BigButton>
          <ToolColumn>
            <ToolRow>
              <ToolButton disabled>
                <Icon name="cut" size={22} />
                剪切
              </ToolButton>
            </ToolRow>
            <ToolRow>
              <ToolButton disabled>
                <Icon name="copy" size={22} />
                复制
              </ToolButton>
            </ToolRow>
          </ToolColumn>
        </GroupBody>
        <GroupTitle>剪贴簿</GroupTitle>
      </Group>
      <Group $width={101}>
        <GroupBody $center>
          <BigButton>
            <Icon name="params" size={48} />
            系统参数
          </BigButton>
        </GroupBody>
      </Group>
      <Group $width={135}>
        <GroupBody>
          <ToolColumn>
            <ToolRow>
              <ToolButton>
                <Icon name="pointer" />
                选择
              </ToolButton>
              <Caret $size={4} $color="#2b4a7c" />
              <ToolButton aria-label="window">
                <Icon name="windows" />
              </ToolButton>
            </ToolRow>
            <ToolRow>
              <ToolButton aria-label="find">
                <Icon name="glasses" />
              </ToolButton>
            </ToolRow>
            <ToolRow>
              <ToolButton aria-label="copies" disabled>
                <Icon name="copies" />
              </ToolButton>
            </ToolRow>
          </ToolColumn>
        </GroupBody>
        <GroupTitle>编辑</GroupTitle>
      </Group>
      <Group $width={394}>
        <GroupBody>
          <Gallery>
            <GalleryGrid>
              {galleryIcons.map((name, i) => (
                <GalleryItem key={i} aria-label={name}>
                  <Icon name={name} />
                </GalleryItem>
              ))}
            </GalleryGrid>
            <GalleryNav>
              <NavArrow $up aria-label="up">
                <Caret $size={4} $color="#6c6c6c" />
              </NavArrow>
              <NavArrow aria-label="down">
                <Caret $size={4} $color="#6c6c6c" />
              </NavArrow>
              <NavArrow aria-label="expand">
                <Icon name="expand" size={12} />
              </NavArrow>
            </GalleryNav>
          </Gallery>
        </GroupBody>
        <GroupTitle>元件</GroupTitle>
      </Group>
      <Group $width={467}>
        <GroupBody $low>
          <div>
            <ArrangeRow>{arrangeTop.map(renderCell)}</ArrangeRow>
            <ArrangeRow>
              {arrangeBottom.map(renderCell)}
              {arrangeMenus.map(name => (
                <IconCell key={name} $menu aria-label={name} disabled>
                  <Icon name={name} />
                  <Caret $size={4} $color="#b4b4b4" />
                </IconCell>
              ))}
            </ArrangeRow>
          </div>
        </GroupBody>
        <GroupTitle>排列</GroupTitle>
      </Group>
      <Group $width={240}>
        <GroupBody $low>
          <div>
            <FontFields>
              <FontPicker>
                <FontSelect aria-label="字体" defaultValue="Agency FB">
                  <option>Agency FB</option>
                </FontSelect>
                <Caret $size={4} $color="#6c6c6c" />
              </FontPicker>
              <SizeInput aria-label="字号" defaultValue="5" />
            </FontFields>
            <ArrangeRow>
              {['fontUp', 'fontDown', 'italic'].map(renderCell)}
              <IconCell $menu aria-label="fontColor" disabled>
                <Icon name="fontColor" />
                <Caret $size={4} $color="#b4b4b4" />
              </IconCell>
            </ArrangeRow>
          </div>
        </GroupBody>
      </Group>
    </Ribbon>
  );
}

const CloseMark = ({ size = 12 }) => (
  <svg width={size} height={size} viewBox="0 0 12 12" aria-hidden="true">
    <path d="M1 1L11 11M11 1L1 11" stroke="#000" strokeWidth="2" />
  </svg>
);

function WindowPreview() {
  return (
    <Sidebar>
      <SidebarHead>
        <h2>窗口预览</h2>
        <button aria-label="menu">
          <Caret $size={7} $color="#000" />
        </button>
        <button aria-label="close">
          <CloseMark />
        </button>
      </SidebarHead>
      <SidebarBody>
        <PreviewList>
          {previews.map(([id, name, kind]) => (
            <PreviewItem key={id}>
              <b>{id}</b>
              <Thumbnail kind={kind} />
              <span>{name}</span>
            </PreviewItem>
          ))}
        </PreviewList>
        <Scroll>
          <button aria-label="scroll up">
            <svg width="12" height="8" viewBox="0 0 12 8">
              <path d="M1 7L6 2L11 7" fill="none" stroke="#606060" strokeWidth="2" />
            </svg>
          </button>
          <i />
        </Scroll>
      </SidebarBody>
    </Sidebar>
  );
}

function HmiCanvas() {
  return (
    <HmiPage>
      <Title $at={[0, 0, 274, 62]}>备胶贴膜机构</Title>
      <Banner $at={[274, 0, 623, 62]}>
        <input aria-label="报警信息" readOnly />
      </Banner>
      <CloseBlock as="button" $at={[897, 1, 200, 61]}>关</CloseBlock>

      {cylinders.map(([text, at]) => (
        <GreenButton key={text} as="button" $at={at} $inset={text.length === 5 ? 3 : 7} $lift={14}>
          {text}
        </GreenButton>
      ))}
      {tags.map(([x, y]) => (
        <React.Fragment key={`${x}-${y}`}>
          <Tag $at={[x, y, 41, 20]}>原点</Tag>
          <Tag $at={[x, y + 40, 41, 20]}>动端</Tag>
        </React.Fragment>
      ))}
      <Caption $at={[1, 217, 232, 36]}>取料中转平台真空</Caption>

      {lamps.map(([x, y]) => (
        <Lamp key={x} as="button" $at={[x, y, 68, 32]}>启用</Lamp>
      ))}
      {valves.map(([text, at]) => (
        <GreenButton key={text} as="button" $at={at} $inset={5} $lift={5}>
          {text}
        </GreenButton>
      ))}
      {flags.map(([x, y]) => (
        <Flag key={x} $at={[x, y, 22, 15]} />
      ))}

      <GlassLamp $at={[754, 62, 133, 49]} />
      <Violet as="button" $at={[756, 134, 125, 61]} $size={23} $lift={10}>机构复位</Violet>
      <Violet as="button" $at={[757, 220, 125, 61]} $size={19} $lift={2}>点动运行</Violet>

      <Outline $at={[897, 63, 200, 600]} />
      {navButtons.map((text, i) => (
        <GreenButton key={i} as="button" $link $at={[904, 73 + i * 66, 120, 52]} $inset={5} $lift={14}>
          {text}
        </GreenButton>
      ))}

      {cabinets.map(at => (
        <Cabinet key={at[0]} $at={at} />
      ))}
      <VerticalText $at={[24, 335, 20, 150]} $line={20}>上过辊电机点动</VerticalText>
      <VerticalText $at={[274, 333, 20, 150]} $line={20}>下过辊电机点动</VerticalText>
      <VerticalText $at={[522, 327, 21, 170]} $line={21}>取料中转X轴伺服</VerticalText>
      {redButtons.map(([text, at]) => (
        <RedButton key={at.join()} as="button" $at={at}>{text}</RedButton>
      ))}
      {offLights.map(([x, y, inset]) => (
        <OffLight key={`${x}-${y}`} $at={[x, y, 61, 45]} $inset={inset}>OFF</OffLight>
      ))}
      {jogButtons.map(([text, at]) => (
        <JogButton key={at.join()} as="button" $at={at}>{text}</JogButton>
      ))}
    </HmiPage>
  );
}

function DocEditor() {
  return (
    <Editor>
      <DocTabs>
        <TabScroll aria-label="previous">
          <svg width="8" height="14" viewBox="0 0 8 14">
            <path d="M7 1V13L1 7Z" fill="none" stroke="#000" />
          </svg>
        </TabScroll>
        {docs.map((name, i) => (
          <DocTab key={name} $shape={i ? 'middle' : 'first'}>{name}</DocTab>
        ))}
        <DocTab $shape="active">
          17 - 备胶贴胶机构
          <CloseMark size={11} />
        </DocTab>
      </DocTabs>
      <Frame>
        <Corner>
          <Icon name="screen" size={13} />
        </Corner>
        <RulerX>
          <CellX $lead>0</CellX>
          {[100, 200, 300, 400, 500, 600, 700, 800, 900, 1000].map(n => (
            <CellX key={n}>{n}</CellX>
          ))}
        </RulerX>
        <RulerY>
          <CellY $lead>
            <span>0</span>
          </CellY>
          {[100, 200, 300, 400, 500, 600].map(n => (
            <CellY key={n}>
              <span>{n}</span>
            </CellY>
          ))}
        </RulerY>
        <Workspace>
          <HmiCanvas />
        </Workspace>
      </Frame>
    </Editor>
  );
}

export default function App() {
  return (
    <Screen>
      <GlobalStyle />
      <MainMenu />
      <MainRibbon />
      <Body>
        <WindowPreview />
        <DocEditor />
      </Body>
    </Screen>
  );
}
